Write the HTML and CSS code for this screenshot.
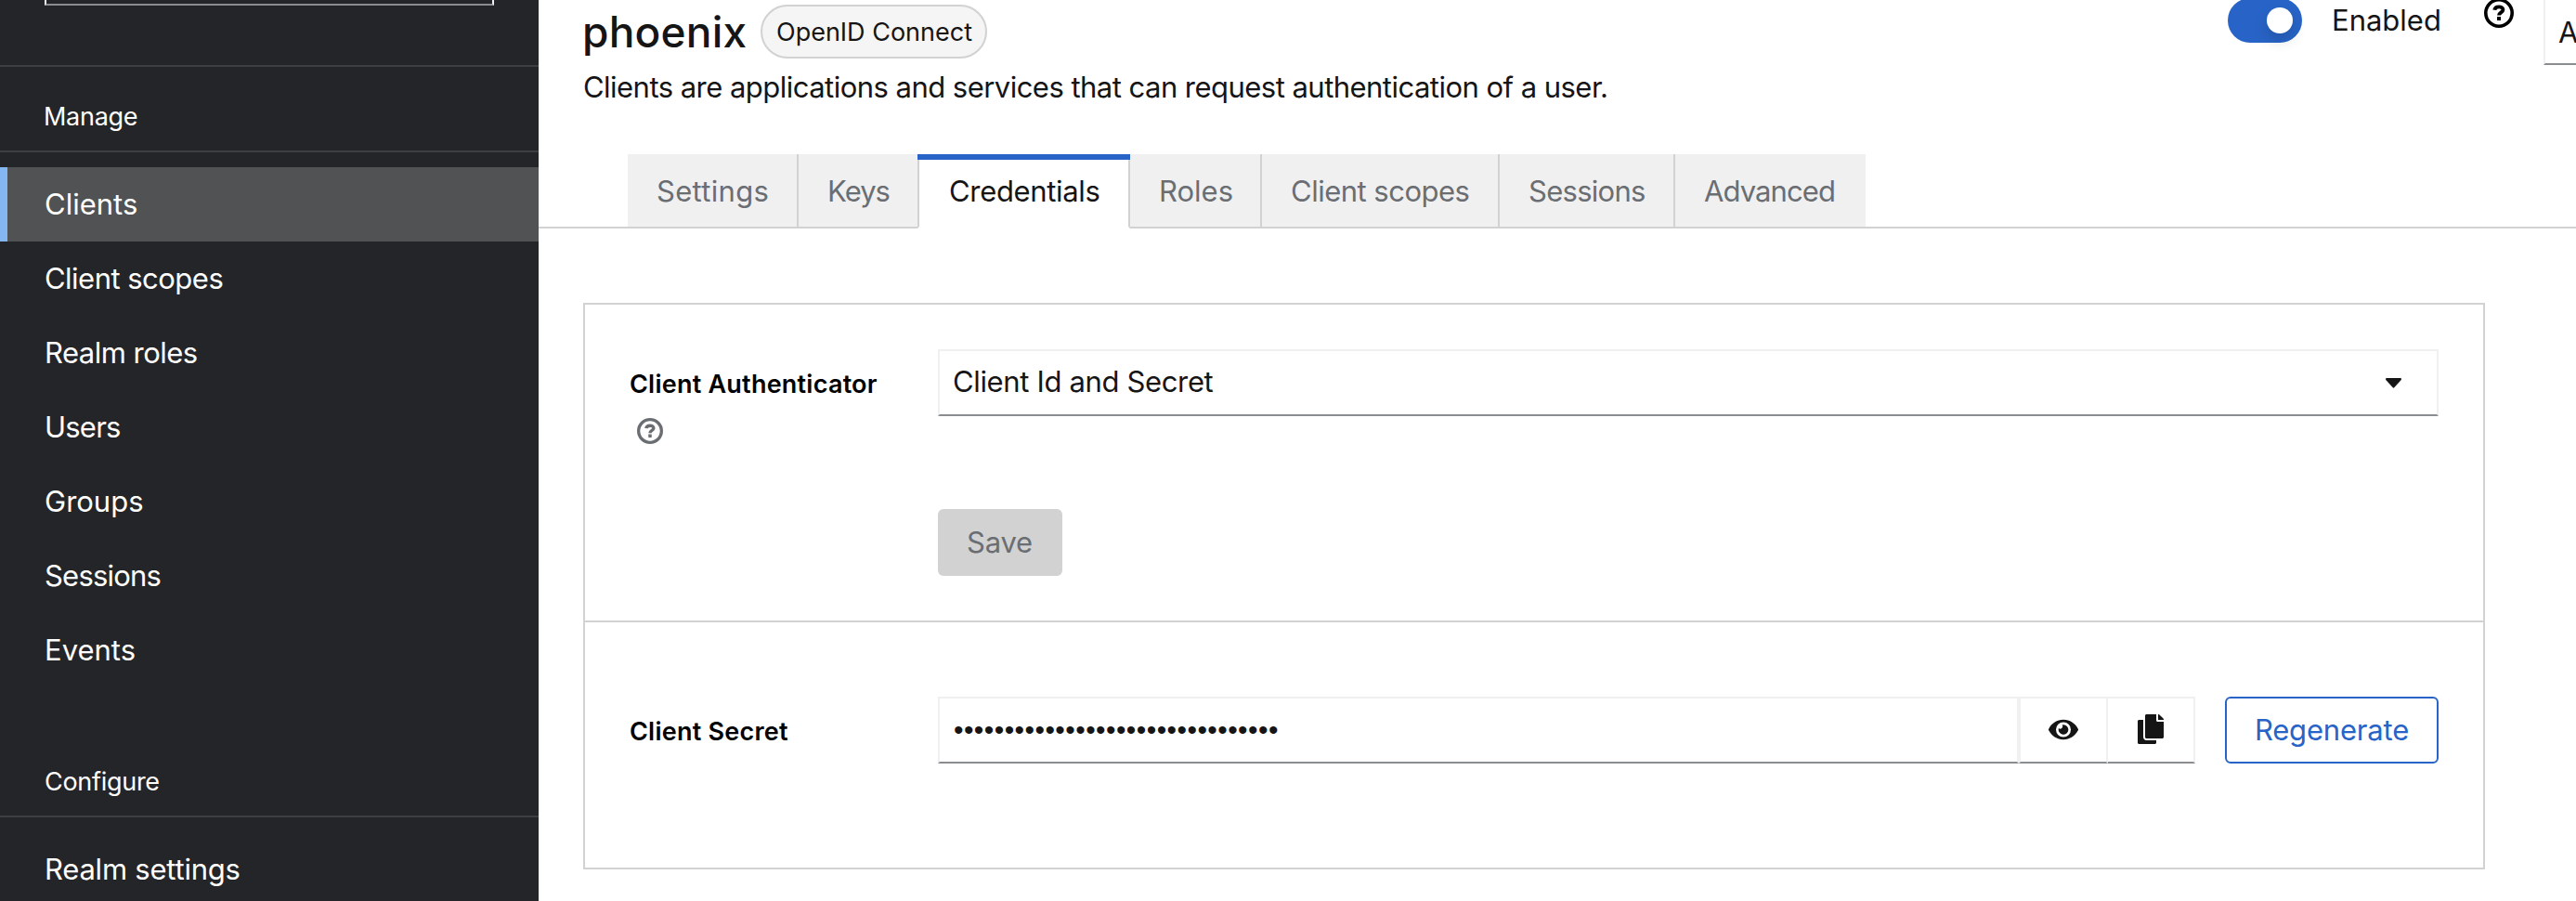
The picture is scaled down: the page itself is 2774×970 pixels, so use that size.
FILE: index.html
```
<!DOCTYPE html>
<html lang="en">
<head>
<meta charset="utf-8">
<title>Client details</title>
<link rel="stylesheet" href="styles.css">
</head>
<body>
<div class="page">
  <aside class="sidebar">
    <div class="realm"><div class="realm-select"></div></div>
    <nav>
      <h2 class="nav-title nav-manage">Manage</h2>
      <ul class="nav-list">
        <li class="nav-item active">Clients</li>
        <li class="nav-item ls-5">Client scopes</li>
        <li class="nav-item ls-5">Realm roles</li>
        <li class="nav-item ls-8">Users</li>
        <li class="nav-item">Groups</li>
        <li class="nav-item ls-8">Sessions</li>
        <li class="nav-item">Events</li>
      </ul>
      <h2 class="nav-title nav-configure">Configure</h2>
      <ul class="nav-list">
        <li class="nav-item ls-2">Realm settings</li>
      </ul>
    </nav>
  </aside>
  <main class="main">
    <header class="header">
      <div class="heading">
        <div class="title-row">
          <h1 class="title">phoenix</h1>
          <span class="badge">OpenID Connect</span>
        </div>
        <p class="description">Clients are applications and services that can request authentication of a user.</p>
      </div>
      <div class="actions">
        <span class="toggle"><span class="knob"></span></span>
        <span class="toggle-label">Enabled</span>
        <svg class="help help-dark" viewBox="0 0 32 32"><circle cx="16" cy="16" r="14.2" fill="none" stroke="currentColor" stroke-width="3.6"/><path d="M11.3 12.7C11.8 8.3 20.4 8.2 20.4 12.5C20.4 15.5 16 15.2 16 18.6" fill="none" stroke="currentColor" stroke-width="3.9"/><path d="M14 20h4v4h-4z" fill="currentColor"/></svg>
        <div class="action-menu">Action</div>
      </div>
    </header>
    <div class="tabs">
      <div class="tab tab-settings">Settings</div>
      <div class="tab tab-keys">Keys</div>
      <div class="tab tab-credentials current">Credentials</div>
      <div class="tab tab-roles">Roles</div>
      <div class="tab tab-scopes">Client scopes</div>
      <div class="tab tab-sessions">Sessions</div>
      <div class="tab tab-advanced">Advanced</div>
    </div>
    <section class="card card-auth">
      <div class="label-cell">
        <div class="label">Client Authenticator</div>
        <svg class="help help-field" viewBox="0 0 32 32"><circle cx="16" cy="16" r="14.1" fill="none" stroke="currentColor" stroke-width="3.8"/><path d="M11.3 12.7C11.8 8.3 20.4 8.2 20.4 12.5C20.4 15.5 16 15.2 16 18.6" fill="none" stroke="currentColor" stroke-width="3.9"/><path d="M14 20h4v4h-4z" fill="currentColor"/></svg>
      </div>
      <div class="select">
        <span class="select-text">Client Id and Secret</span>
        <svg class="caret" viewBox="0 0 20 12"><path d="M1.6 0H18.4Q20 0.6 19 2.2L10.8 11.3Q10 12 9.2 11.3L1 2.2Q0 0.6 1.6 0Z" fill="#151515"/></svg>
      </div>
      <button class="save">Save</button>
    </section>
    <section class="card card-secret">
      <div class="label label-secret">Client Secret</div>
      <div class="secret-row">
        <div class="secret">••••••••••••••••••••••••••••••••</div>
        <div class="icon-button icon-eye"><svg class="eye" viewBox="0 0 576 512"><path fill="#151515" d="M572.52 241.4C518.29 135.59 410.93 64 288 64S57.68 135.64 3.48 241.41a32.35 32.35 0 0 0 0 29.19C57.71 376.41 165.07 448 288 448s230.32-71.64 284.52-177.41a32.35 32.35 0 0 0 0-29.19zM288 400a144 144 0 1 1 144-144 143.93 143.93 0 0 1-144 144zm0-240a95.31 95.31 0 0 0-25.31 3.79 47.85 47.85 0 0 1-66.9 66.9A95.78 95.78 0 1 0 288 160z"/></svg></div>
        <div class="icon-button icon-copy"><svg class="copy" viewBox="0 0 448 512"><path fill="#151515" d="M320 448v40c0 13.255-10.745 24-24 24H24c-13.255 0-24-10.745-24-24V120c0-13.255 10.745-24 24-24h72v296c0 30.879 25.121 56 56 56h168zm0-344V0H152c-13.255 0-24 10.745-24 24v368c0 13.255 10.745 24 24 24h272c13.255 0 24-10.745 24-24V128H344c-13.2 0-24-10.8-24-24zm120.971-31.029L375.029 7.029A24 24 0 0 0 358.059 0H352v96h96v-6.059a24 24 0 0 0-7.029-16.97z"/></svg></div>
        <button class="regenerate">Regenerate</button>
      </div>
    </section>
  </main>
</div>
</body>
</html>
```
FILE: styles.css
```
* { box-sizing: border-box; margin: 0; padding: 0; }
body {
  font-family: Inter, "Liberation Sans", sans-serif;
  font-size: 31px;
  color: #151515;
  background: #fff;
  overflow: hidden;
}
.page { display: flex; height: 970px; }

/* Sidebar */
.sidebar { width: 580px; flex: none; background: #242528; color: #fff; overflow: hidden; }
.realm { height: 72px; padding: 0 48px; border-bottom: 2px solid #3d3f43; }
.realm-select { height: 6px; border: 2px solid #f0f0f0; border-top: 0; border-bottom-color: #8a8d90; }
.nav-title {
  font-size: 27px; font-weight: 400; line-height: 42px; letter-spacing: -0.29px;
  padding: 1px 48px 15px 47px; border-bottom: 2px solid #3d3f43; margin-bottom: 16px;
}
.nav-manage { margin-top: 32px; }
.nav-configure { margin-top: 80px; padding-left: 48px; }
.nav-list { list-style: none; }
.nav-item { height: 80px; line-height: 80px; padding-left: 48px; white-space: nowrap; }
.active { background: #515254; border-left: 8px solid #84b6f1; padding-left: 40px; }
.ls-2 { letter-spacing: -0.22px; }
.ls-5 { letter-spacing: -0.52px; }
.ls-8 { letter-spacing: -0.79px; }

/* Header */
.main { flex: 1; min-width: 0; }
.header { display: flex; justify-content: space-between; height: 118px; padding-left: 48px; }
.title-row { display: flex; align-items: center; height: 68px; }
.title { font-size: 46px; font-weight: 500; line-height: 68px; letter-spacing: 0.24px; width: 191px; margin-left: -1px; }
.badge {
  width: 244px; height: 58px; margin-left: 1px; padding-left: 15px;
  border: 2px solid #d2d2d2; border-radius: 29px; background: #f5f5f5;
  font-size: 27px; line-height: 55px; white-space: nowrap;
}
.description { line-height: 48px; margin-top: 2px; letter-spacing: -0.53px; white-space: nowrap; }
.actions { display: flex; margin-top: -2px; }
.toggle { width: 80px; height: 48px; border-radius: 24px; background: #2864c7; padding: 10px 10px 10px 42px; }
.knob { display: block; width: 28px; height: 28px; border-radius: 50%; background: #fff; box-shadow: 0 8px 16px rgba(3, 3, 3, 0.16); }
.toggle-label { line-height: 48px; margin-left: 32px; width: 164px; }
.help { display: block; }
.help-dark { width: 32px; height: 32px; color: #000; }
.help-field { width: 28px; height: 28px; margin-left: 8px; color: #6a6e73; }
.action-menu {
  width: 35px; height: 72px; margin-left: 32px; padding-left: 14px; line-height: 69px;
  border: 2px solid #f0f0f0; border-right: 0; border-bottom-color: #8a8d90; overflow: hidden;
}

/* Tabs */
.tabs { display: flex; height: 80px; margin-top: 48px; padding-left: 96px; box-shadow: inset 0 -2px #d2d2d2; }
.tab {
  height: 80px; line-height: 80px; padding-left: 31px; color: #6a6e73; background: #f0f0f0;
  border-right: 2px solid #d2d2d2; border-bottom: 2px solid #d2d2d2; white-space: nowrap;
}
.tab-settings { width: 184px; letter-spacing: 0.31px; }
.tab-keys { width: 128px; border-right: 0; letter-spacing: -0.96px; }
.tab-credentials { width: 229px; letter-spacing: -0.33px; }
.tab-roles { width: 142px; }
.tab-scopes { width: 256px; letter-spacing: -0.51px; }
.tab-sessions { width: 189px; letter-spacing: -0.73px; }
.tab-advanced { width: 205px; border-right: 0; letter-spacing: -0.9px; }
.current { position: relative; background: #fff; color: #151515; border-left: 2px solid #d2d2d2; border-bottom-color: #fff; padding-left: 32px; }
.current::before { content: ""; position: absolute; top: 0; left: -2px; right: -2px; height: 6px; background: #2864c7; }

/* Cards */
.card {
  width: 2048px; margin-left: 48px; padding: 48px; border: 2px solid #d2d2d2;
  display: grid; grid-template-columns: 332px 1fr; align-items: start;
}
.card-auth { margin-top: 80px; height: 344px; grid-template-rows: 172px 72px; }
.card-secret { height: 266px; border-top: 0; padding-top: 80px; }
.label { font-size: 27px; font-weight: 600; height: 74px; line-height: 76px; letter-spacing: 0.23px; color: #000; white-space: nowrap; }
.select {
  height: 72px; display: flex; align-items: center; justify-content: space-between;
  padding: 0 37px 0 14px; border: 2px solid #f0f0f0; border-bottom-color: #8a8d90;
}
.select-text { letter-spacing: -0.35px; line-height: 66px; height: 68px; }
.caret { width: 19px; height: 11px; }
.save {
  grid-column: 2; width: 134px; height: 72px; border: 0; border-radius: 6px; padding: 0 1px 1px 0;
  background: #d2d2d2; color: #6a6e73; font: inherit; letter-spacing: -0.22px;
}
.secret-row { display: flex; height: 72px; }
.secret {
  flex: 1; padding-left: 15px; border: 2px solid #f0f0f0; border-bottom-color: #8a8d90;
  font: 30px/67px "Liberation Sans", sans-serif; letter-spacing: 0.43px;
}
.icon-button {
  display: flex; align-items: center; justify-content: center; padding-bottom: 2px;
  border: 2px solid #f0f0f0; border-bottom-color: #8a8d90;
}
.icon-eye { width: 96px; }
.icon-copy { width: 94px; border-left: 0; }
.eye { width: 32px; height: 29px; }
.copy { width: 28px; height: 32px; }
.regenerate {
  width: 230px; margin-left: 32px; border: 2px solid #2864c7; border-radius: 6px; padding-bottom: 1px;
  background: #fff; color: #2864c7; font: inherit; letter-spacing: -0.18px;
}
```
